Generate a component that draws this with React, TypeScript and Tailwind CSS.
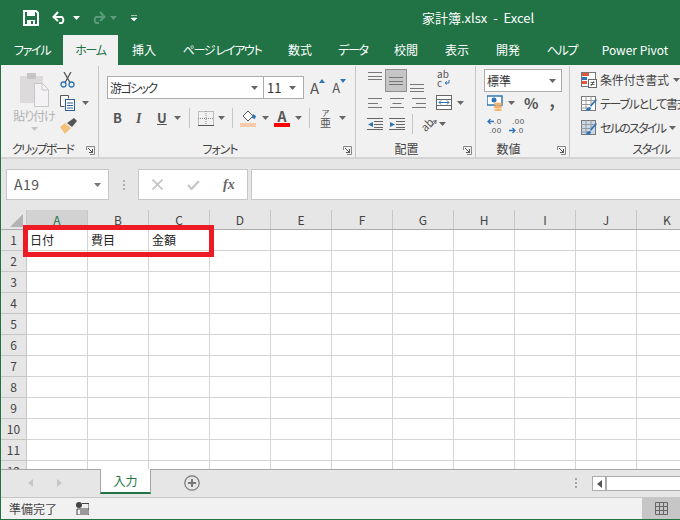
import { ReactNode } from "react";

const COLS = ["A", "B", "C", "D", "E", "F", "G", "H", "I", "J", "K"];
const ROWS = [1, 2, 3, 4, 5, 6, 7, 8, 9, 10, 11, 12];
const TABS = [
  { label: "ファイル", w: "w-[62px]", kana: true },
  { label: "ホーム", w: "w-[55px]", active: true, kana: true },
  { label: "挿入", w: "w-[52px]" },
  { label: "ページ レイアウト", w: "w-[104px]", kana: true },
  { label: "数式", w: "w-[52px]" },
  { label: "データ", w: "w-[54px]", kana: true },
  { label: "校閲", w: "w-[52px]" },
  { label: "表示", w: "w-[50px]" },
  { label: "開発", w: "w-[52px]" },
  { label: "ヘルプ", w: "w-[56px]", kana: true },
  { label: "Power Pivot", w: "w-[90px]" },
];

function Caret({ className = "", color = "#666" }: { className?: string; color?: string }) {
  return (
    <svg width="7" height="4" viewBox="0 0 7 4" className={"shrink-0 " + className}>
      <path d="M0 0h7L3.5 4z" fill={color} />
    </svg>
  );
}

function Launcher() {
  return (
    <svg width="9" height="9" viewBox="0 0 9 9" className="absolute right-[3px] bottom-[2px]">
      <path d="M.5 4V.5H8.500V8.500H4" fill="none" stroke="#888" />
      <path d="M2 2l4.500 4.500M3 6.500h3.500V3" fill="none" stroke="#555" />
    </svg>
  );
}

function Group({ width, label, labelPad, children }: { width: string; label: string; labelPad: string; children: ReactNode }) {
  return (
    <div className={"relative flex h-[91px] shrink-0 flex-col border-r border-[#c6c6c6] " + width}>
      <div className="h-[75px] shrink-0">{children}</div>
      <div className={"text-center text-[12px] leading-[16px] text-[#444] " + labelPad}>{label}</div>
      <Launcher />
    </div>
  );
}

function Lines({ align = "center", gap = 3.5, className = "" }: { align?: "left" | "center" | "right"; gap?: number; className?: string }) {
  // alignment glyphs, a stack of grey bars
  const short = align === "center" ? 9 : 10;
  const bars = gap > 4 ? [14, short, 14] : [14, 14, 14];
  return (
    <svg width="16" height={Math.ceil(gap * 2) + 1} className={"shrink-0 " + className}>
      {bars.map((w, i) => {
        const x = align === "left" ? 1 : align === "right" ? 15 - w : (16 - w) / 2;
        return <rect key={i} x={x} y={Math.round(i * gap)} width={w} height="1" fill="#777" />;
      })}
    </svg>
  );
}

function Clipboard() {
  return (
    <div className="flex">
      <div className="ml-[11px] flex w-[44px] flex-col items-center pt-[6px]">
        <svg width="29" height="35" viewBox="0 0 29 35">
          <rect x="0" y="4" width="23" height="27" rx="1" fill="#dcdadb" />
          <rect x="7" y="1" width="9" height="6" rx="1" fill="#c6c4c5" />
          <path d="M14.500 11.500h8l6 6v17h-14z" fill="#f4f2f4" stroke="#c8c6c8" />
          <path d="M22 12v6h6" fill="none" stroke="#c8c6c8" />
        </svg>
        <div className="mt-[1px] text-[12px] leading-[16px] tracking-[-1px] whitespace-nowrap text-[#b4b4b4]">貼り付け</div>
        <Caret className="mt-[3px]" color="#c4c4c4" />
      </div>
      <div className="ml-[4px] flex flex-col pt-[6px]">
        <svg width="16" height="16" viewBox="0 0 16 16">
          <path d="M4 0l6 10.500M11 0L5 10.500" stroke="#555" strokeWidth="1.300" fill="none" />
          <circle cx="3.500" cy="12.500" r="2.500" fill="none" stroke="#2f75b5" strokeWidth="1.300" />
          <circle cx="11.500" cy="12.500" r="2.500" fill="none" stroke="#2f75b5" strokeWidth="1.300" />
        </svg>
        <div className="mt-[7px] flex items-center">
          <svg width="16" height="16" viewBox="0 0 16 16">
            <path d="M.5 .5h8v3M.5 .5v11h4" fill="#fff" stroke="#555" />
            <rect x="5.500" y="4.500" width="9" height="11" fill="#fff" stroke="#2f5f8f" />
            <path d="M7 8h6M7 10.500h6M7 13h6" stroke="#2f5f8f" />
          </svg>
          <Caret className="ml-[6px]" />
        </div>
        <svg width="17" height="16" viewBox="0 0 17 16" className="mt-[7px]">
          <path d="M0 9l5-4 6 5-6 6z" fill="#f2c17e" />
          <path d="M7 5l7-5 3 3-5 6z" fill="#555" />
        </svg>
      </div>
    </div>
  );
}

function Font() {
  return (
    <div className="flex flex-col pl-[8px] pt-[10px]">
      <div className="flex items-center">
        <div className="flex h-[23px] w-[157px] items-center border border-[#ababab] bg-white pl-[2px] pr-[5px] text-[12px] text-[#333]">
          <span className="flex-1 tracking-[-1.6px]">游ゴシック</span>
          <Caret />
        </div>
        <div className="flex h-[23px] w-[40px] items-center border border-l-0 border-[#ababab] bg-white pl-[3px] pr-[7px] text-[13px] text-[#333]">
          <span className="flex-1">11</span>
          <Caret />
        </div>
        <div className="ml-[6px] flex items-start text-[15px] leading-[20px] text-[#555]">
          <span>A</span>
          <svg width="6" height="4" viewBox="0 0 6 4" className="mt-[1px]"><path d="M0 4h6L3 0z" fill="#2f75b5" /></svg>
        </div>
        <div className="ml-[7px] flex items-start text-[13px] leading-[20px] text-[#555]">
          <span>A</span>
          <svg width="6" height="4" viewBox="0 0 6 4" className="mt-[1px]"><path d="M0 0h6L3 4z" fill="#2f75b5" /></svg>
        </div>
      </div>
      <div className="mt-[9px] flex h-[20px] items-center">
        <span className="ml-[6px] w-[23px] text-[13px] font-bold text-[#555]">B</span>
        <span className="w-[21px] font-['Liberation_Serif',serif] text-[14px] font-bold italic text-[#555]">I</span>
        <span className="w-[15px] text-[13px] font-bold text-[#555] underline">U</span>
        <Caret className="ml-[2px]" />
        <div className="ml-[8px] h-[20px] w-px bg-[#c6c6c6]" />
        <svg width="16" height="15" viewBox="0 0 16 15" className="ml-[8px]">
          <rect x=".5" y=".5" width="15" height="14" fill="none" stroke="#888" strokeDasharray="1 1" />
          <path d="M8 0v15M0 7.500h16" stroke="#888" strokeDasharray="1 1" />
          <path d="M0 14.500h16" stroke="#555" />
        </svg>
        <Caret className="ml-[4px]" />
        <div className="ml-[7px] h-[20px] w-px bg-[#c6c6c6]" />
        <svg width="17" height="18" viewBox="0 0 17 18" className="ml-[7px]">
          <path d="M3 7l5-5 5 5-5 5z" fill="#fff" stroke="#555" />
          <path d="M13 5l3 2-1 3-3-1z" fill="#2f75b5" />
          <rect x="0" y="14" width="16" height="4" fill="#f8cbad" />
        </svg>
        <Caret className="ml-[5px]" />
        <div className="ml-[5px] flex w-[16px] flex-col items-center">
          <span className="text-[14px] font-bold leading-[14px] text-[#555]">A</span>
          <div className="h-[4px] w-[16px] bg-[#ff0000]" />
        </div>
        <Caret className="ml-[5px]" />
        <div className="ml-[7px] h-[20px] w-px bg-[#c6c6c6]" />
        <div className="ml-[10px] flex w-[11px] flex-col items-center text-[#555]">
          <span className="text-[8px] leading-[8px]">ア</span>
          <span className="text-[11px] leading-[11px]">亜</span>
        </div>
        <Caret className="ml-[8px]" />
      </div>
    </div>
  );
}

function Alignment() {
  return (
    <div className="flex flex-col pl-[11px]">
      <div className="flex h-[27px] items-start pt-[3px]">
        <Lines className="mt-[3px]" />
        <div className="ml-[2px] flex h-[23px] w-[22px] items-center justify-center border border-[#8f8f8f] bg-[#c6c6c6]">
          <Lines />
        </div>
        <Lines className="ml-[2px] mt-[15px]" />
        <div className="ml-[12px] flex flex-col text-[10px] text-[#555]">
          <span className="h-[9px] leading-[9px]">ab</span>
          <span className="flex h-[9px] items-center leading-[9px]">c<svg width="6" height="6" viewBox="0 0 6 6" className="ml-[2px]"><path d="M5 0v3H1M3 1.500L1 3l2 1.500" fill="none" stroke="#2f75b5" /></svg></span>
        </div>
      </div>
      <div className="mt-[2px] flex h-[15px] items-center">
        <Lines align="left" gap={4.500} />
        <Lines align="center" gap={4.500} className="ml-[6px]" />
        <Lines align="right" gap={4.500} className="ml-[6px]" />
        <svg width="16" height="15" viewBox="0 0 16 15" className="ml-[9px]">
          <rect x=".5" y=".5" width="15" height="14" fill="#fff" stroke="#666" />
          <path d="M0 4.500h16M0 10.500h16" stroke="#666" />
          <path d="M3 7.500h10M5 5.500l-2 2 2 2M11 5.500l2 2-2 2" fill="none" stroke="#2f75b5" />
        </svg>
        <Caret className="ml-[5px]" />
      </div>
      <div className="mt-[7px] flex h-[14px] items-center">
        <svg width="16" height="12" viewBox="0 0 16 12"><path d="M0 .5h16M7 3.500h9M7 6.500h9M7 9.500h9M0 11.500h16" stroke="#666" /><path d="M6 4L1 6.500 6 9z" fill="#2f75b5" /></svg>
        <svg width="16" height="12" viewBox="0 0 16 12" className="ml-[6px]"><path d="M0 .5h16M7 3.500h9M7 6.500h9M7 9.500h9M0 11.500h16" stroke="#666" /><path d="M1 4l5 2.500L1 9z" fill="#2f75b5" /></svg>
        <div className="ml-[7px] h-[20px] w-px bg-[#c6c6c6]" />
        <div className="ml-[7px] flex h-[16px] w-[17px] items-center">
          <span className="-rotate-45 text-[11px] leading-[10px] text-[#555]">ab</span>
          <svg width="8" height="10" viewBox="0 0 8 10" className="-ml-[3px]">
            <path d="M1 9L7 1M7 1L3 2M7 1L6.500 5" fill="none" stroke="#555" />
          </svg>
        </div>
        <Caret className="ml-[2px]" />
      </div>
    </div>
  );
}

function NumberFormat() {
  return (
    <div className="flex flex-col pl-[8px] pt-[3px]">
      <div className="flex h-[23px] w-[78px] items-center border border-[#ababab] bg-white pl-[2px] pr-[5px] text-[12px] text-[#333]">
        <span className="flex-1">標準</span>
        <Caret />
      </div>
      <div className="mt-[2px] flex h-[17px] items-center">
        <svg width="17" height="16" viewBox="0 0 17 16" className="ml-[3px]">
          <rect x="0" y="1" width="15" height="9" fill="#fff" stroke="#2f75b5" strokeWidth="1.500" />
          <circle cx="7" cy="5" r="2.500" fill="#2f75b5" />
          <ellipse cx="11" cy="9" rx="4" ry="1.500" fill="#f4b26b" />
          <ellipse cx="11" cy="12" rx="4" ry="1.500" fill="#f4b26b" />
          <ellipse cx="11" cy="15" rx="4" ry="1" fill="#f4b26b" />
        </svg>
        <Caret className="ml-[4px]" />
        <span className="ml-[9px] text-[15px] font-semibold leading-[17px] text-[#555]">%</span>
        <span className="ml-[11px] -mt-[6px] text-[16px] font-bold leading-[14px] text-[#555]">,</span>
      </div>
      <div className="mt-[6px] flex h-[18px] items-start pl-[3px] font-['Liberation_Sans',sans-serif]">
        <div className="w-[15px] text-[8px] leading-[9px] tracking-[0.5px] text-[#555]">
          <div className="flex h-[9px] items-center"><svg width="7" height="7" viewBox="0 0 7 7"><path d="M7 3.500H1M3.500 1L1 3.500 3.500 6" fill="none" stroke="#2f75b5" strokeWidth="1.300" /></svg>.0</div>
          <div className="pl-[2px]">.00</div>
        </div>
        <div className="ml-[7px] w-[16px] text-[8px] leading-[9px] tracking-[0.5px] text-[#555]">
          <div className="pl-[3px]">.00</div>
          <div className="flex h-[9px] items-center"><svg width="7" height="7" viewBox="0 0 7 7"><path d="M0 3.500h6M3.500 1L6 3.500 3.500 6" fill="none" stroke="#2f75b5" strokeWidth="1.300" /></svg>.0</div>
        </div>
      </div>
    </div>
  );
}

function StyleIcon({ kind }: { kind: "cond" | "table" | "cell" }) {
  return (
    <svg width="16" height="16" viewBox="0 0 16 16" className="shrink-0">
      <rect x=".5" y=".5" width="14" height="14" fill={kind === "cell" ? "#c9d9ea" : "#fff"} stroke="#777" />
      {kind === "cond" && <path d="M1 1h7v3H1z" fill="#e0583b" />}
      {kind === "cond" && <path d="M1 5h5v3H1z" fill="#2f75b5" />}
      {kind === "cond" && <path d="M1 9h5v3H1z" fill="#e0583b" />}
      {kind === "cond" && <rect x="7.500" y="7.500" width="8" height="8" fill="#fff" stroke="#666" />}
      {kind === "cond" && <path d="M9.500 10.500h4M9.500 12.500h4M10 14l3-5" fill="none" stroke="#444" strokeWidth=".8" />}
      {kind !== "cond" && <path d="M0 4.500h15M0 8.500h9M0 12h7M5 0v13M10 0v8" stroke="#999" />}
      {kind !== "cond" && <path d="M9 9l6-6 1 1-6 7zM5 15c0-3 2-4 4-4l1 1c0 2-2 3-5 3z" fill="#2f75b5" />}
    </svg>
  );
}

function Styles() {
  const rows: { kind: "cond" | "table" | "cell"; label: string; track: string; caret?: boolean }[] = [
    { kind: "cond", label: "条件付き書式", track: "tracking-[-0.3px]", caret: true },
    { kind: "table", label: "テーブルとして書式設定", track: "tracking-[-1.3px]" },
    { kind: "cell", label: "セルのスタイル", track: "tracking-[-1.7px]", caret: true },
  ];
  return (
    <div className="flex flex-col gap-[7px] pl-[11px] pt-[5px]">
      {rows.map((r) => (
        <div key={r.label} className="flex h-[17px] items-center text-[12px] whitespace-nowrap text-[#444]">
          <StyleIcon kind={r.kind} />
          <span className={"ml-[3px] " + r.track}>{r.label}</span>
          {r.caret && <Caret className="ml-[4px]" />}
        </div>
      ))}
    </div>
  );
}

export default function App() {
  return (
    <div className="flex h-[520px] w-[680px] flex-col overflow-hidden border-b border-l border-[#217346] bg-[#e6e6e6] font-['Noto_Sans_CJK_JP','Noto_Sans',sans-serif] text-[#333] [font-feature-settings:'palt']">
      {/* title bar */}
      <div className="relative flex h-[35px] shrink-0 items-center bg-[#217346] text-white">
        <svg width="16" height="16" viewBox="0 0 16 16" className="ml-[22px]">
          <path d="M1 1h12l2 2v12H1z" fill="none" stroke="#fff" strokeWidth="2" />
          <path d="M4 1h8v5H4zM4 10h8v5H4z" fill="#fff" />
          <rect x="8" y="11" width="2" height="3" fill="#217346" />
        </svg>
        <svg width="16" height="13" viewBox="0 0 16 13" className="ml-[13px]">
          <path d="M2 6h8a4 4 0 0 1 0 6H7M6 1L1.500 6 6 10" fill="none" stroke="#fff" strokeWidth="2" />
        </svg>
        <Caret className="ml-[5px]" color="#fff" />
        <svg width="16" height="13" viewBox="0 0 16 13" className="ml-[10px]">
          <path d="M14 6H6a4 4 0 0 0 0 6h3M10 1l4.500 5L10 10" fill="none" stroke="#5b9a7a" strokeWidth="2" />
        </svg>
        <Caret className="ml-[4px]" color="#5b9a7a" />
        <svg width="6" height="6" viewBox="0 0 6 6" className="ml-[14px]">
          <path d="M0 .5h6M0 3h6L3 6z" fill="#fff" stroke="#fff" strokeWidth=".6" />
        </svg>
        <div className="ml-[285px] whitespace-pre text-[13px]">家計簿.xlsx  -  Excel</div>
      </div>

      {/* ribbon tabs */}
      <div className="flex h-[30px] shrink-0 bg-[#217346]">
        {TABS.map((t) => (
          <div
            key={t.label}
            className={
              "flex shrink-0 items-center justify-center text-[12px] whitespace-nowrap " +
              t.w +
              (t.kana ? " tracking-[-1.300px]" : "") +
              (t.active ? " bg-[#f1f1f1] text-[#217346]" : " text-white")
            }
          >
            {t.label}
          </div>
        ))}
      </div>

      {/* ribbon */}
      <div className="flex h-[94px] shrink-0 border-b-2 border-[#d4d4d4] bg-[#f1f1f1] pt-[1px]">
        <Group width="w-[98px]" label="クリップボード" labelPad="pr-[14px] tracking-[-1.800px]"><Clipboard /></Group>
        <Group width="w-[257px]" label="フォント" labelPad="pr-[14px] tracking-[-1px]"><Font /></Group>
        <Group width="w-[120px]" label="配置" labelPad="pr-[18px]"><Alignment /></Group>
        <Group width="w-[94px]" label="数値" labelPad="pr-[28px]"><NumberFormat /></Group>
        <div className="relative flex h-[91px] flex-1 flex-col overflow-hidden">
          <div className="h-[75px] shrink-0"><Styles /></div>
          <div className="pl-[52px] text-center text-[12px] leading-[16px] tracking-[-1.500px] text-[#444]">スタイル</div>
        </div>
      </div>

      {/* formula bar */}
      <div className="flex h-[51px] shrink-0 items-start pt-[10px]">
        <div className="ml-[5px] flex h-[31px] w-[103px] items-center border border-[#c6c6c6] bg-white pl-[7px] pr-[7px] text-[14px] tracking-[0.5px] text-[#555]">
          <span className="flex-1">A19</span>
          <Caret color="#777" />
        </div>
        <div className="ml-[13px] flex h-[31px] w-[3px] flex-col items-center justify-center gap-[2px]">
          <i className="block h-[2px] w-[2px] bg-[#b0b0b0]" />
          <i className="block h-[2px] w-[2px] bg-[#b0b0b0]" />
          <i className="block h-[2px] w-[2px] bg-[#b0b0b0]" />
        </div>
        <div className="ml-[13px] flex h-[31px] w-[110px] items-center border border-[#c6c6c6] bg-white pl-[13px]">
          <svg width="11" height="11" viewBox="0 0 11 11"><path d="M.5 .5l10 10M10.500 .5l-10 10" stroke="#c6c6c6" strokeWidth="1.800" /></svg>
          <svg width="13" height="10" viewBox="0 0 13 10" className="ml-[24px]"><path d="M1 5l3.500 4L12 1" fill="none" stroke="#c6c6c6" strokeWidth="2.200" /></svg>
          <span className="ml-[23px] font-['Liberation_Serif',serif] text-[14px] font-bold italic leading-[14px] text-[#666]">fx</span>
        </div>
        <div className="ml-[3px] h-[31px] flex-1 border-y border-l border-[#c6c6c6] bg-white" />
      </div>

      {/* sheet */}
      <div className="relative min-h-0 flex-1 overflow-hidden bg-white">
        <div className="flex h-[20px] border-b border-[#ababab] bg-[#e6e6e6]">
          <div className="relative w-[26px] shrink-0 border-r border-[#c6c6c6]">
            <svg width="13" height="13" viewBox="0 0 13 13" className="absolute right-[3px] bottom-[2px]"><path d="M13 0v13H0z" fill="#b4b4b4" /></svg>
          </div>
          {COLS.map((c) => (
            <div
              key={c}
              className={
                "flex w-[61px] shrink-0 items-center justify-center border-r border-[#c6c6c6] text-[12px] " +
                (c === "A" ? "bg-[#d2d2d2] text-[#217346]" : "text-[#444]")
              }
            >
              {c}
            </div>
          ))}
        </div>
        {ROWS.map((r) => (
          <div key={r} className="flex h-[21px]">
            <div className="flex w-[26px] shrink-0 items-center justify-center border-r border-b border-[#c6c6c6] bg-[#e6e6e6] text-[12px] text-[#444]">
              {r}
            </div>
            {COLS.map((c, i) => (
              <div key={c} className="flex w-[61px] shrink-0 items-center overflow-hidden border-r border-b border-[#d4d4d4] pl-[3px] text-[12px] text-[#222]">
                {r === 1 && i < 3 ? ["日付", "費目", "金額"][i] : ""}
              </div>
            ))}
          </div>
        ))}
        {/* callout drawn over the sheet */}
        <div className="absolute top-[15px] left-[22px] h-[32px] w-[191px] border-[5px] border-[#ed1c24]" />
      </div>

      {/* sheet tabs */}
      <div className="flex h-[29px] shrink-0 items-start border-y border-t-[#a5a5a5] border-b-[#c6c6c6] bg-[#e6e6e6]">
        <svg width="5" height="8" viewBox="0 0 5 8" className="ml-[27px] mt-[9px]"><path d="M5 0v8L0 4z" fill="#c6c6c6" /></svg>
        <svg width="5" height="8" viewBox="0 0 5 8" className="ml-[24px] mt-[9px]"><path d="M0 0v8l5-4z" fill="#c6c6c6" /></svg>
        <div className="ml-[38px] -mt-[1px] flex h-[25px] w-[51px] items-center justify-center border-x border-b-2 border-x-[#a5a5a5] border-b-[#217346] bg-white text-[12px] text-[#217346]">
          入力
        </div>
        <svg width="16" height="16" viewBox="0 0 16 16" className="ml-[33px] mt-[5px]">
          <circle cx="8" cy="8" r="7.200" fill="none" stroke="#777" strokeWidth="1.200" />
          <path d="M8 4v8M4 8h8" stroke="#777" strokeWidth="2" />
        </svg>
        <div className="ml-[375px] mt-[8px] flex w-[3px] flex-col gap-[2px]">
          <i className="block h-[2px] w-[2px] bg-[#a5a5a5]" />
          <i className="block h-[2px] w-[2px] bg-[#a5a5a5]" />
          <i className="block h-[2px] w-[2px] bg-[#a5a5a5]" />
        </div>
        <div className="ml-[14px] mt-[6px] flex h-[15px] flex-1 border-y border-l border-[#ababab] bg-white">
          <div className="flex w-[14px] items-center justify-center border-r-2 border-[#ababab]">
            <svg width="5" height="8" viewBox="0 0 5 8"><path d="M5 0v8L0 4z" fill="#555" /></svg>
          </div>
        </div>
      </div>

      {/* status bar */}
      <div className="flex h-[21px] shrink-0 items-center bg-[#f1f1f1]">
        <span className="ml-[8px] text-[12px] text-[#444]">準備完了</span>
        <svg width="13" height="13" viewBox="0 0 13 13" className="ml-[19px]">
          <circle cx="3" cy="3" r="3" fill="#444" />
          <path d="M6 1.500h7V13H1V7h12M4 9h8M4 11h8" fill="none" stroke="#444" />
        </svg>
        <div className="ml-auto flex h-full w-[38px] items-center justify-center bg-[#c6c6c6]">
          <svg width="13" height="13" viewBox="0 0 13 13">
            <path d="M.5 .5h12v12H.5zM4.500 0v13M8.500 0v13M0 4.500h13M0 8.500h13" fill="none" stroke="#666" />
          </svg>
        </div>
      </div>
    </div>
  );
}
